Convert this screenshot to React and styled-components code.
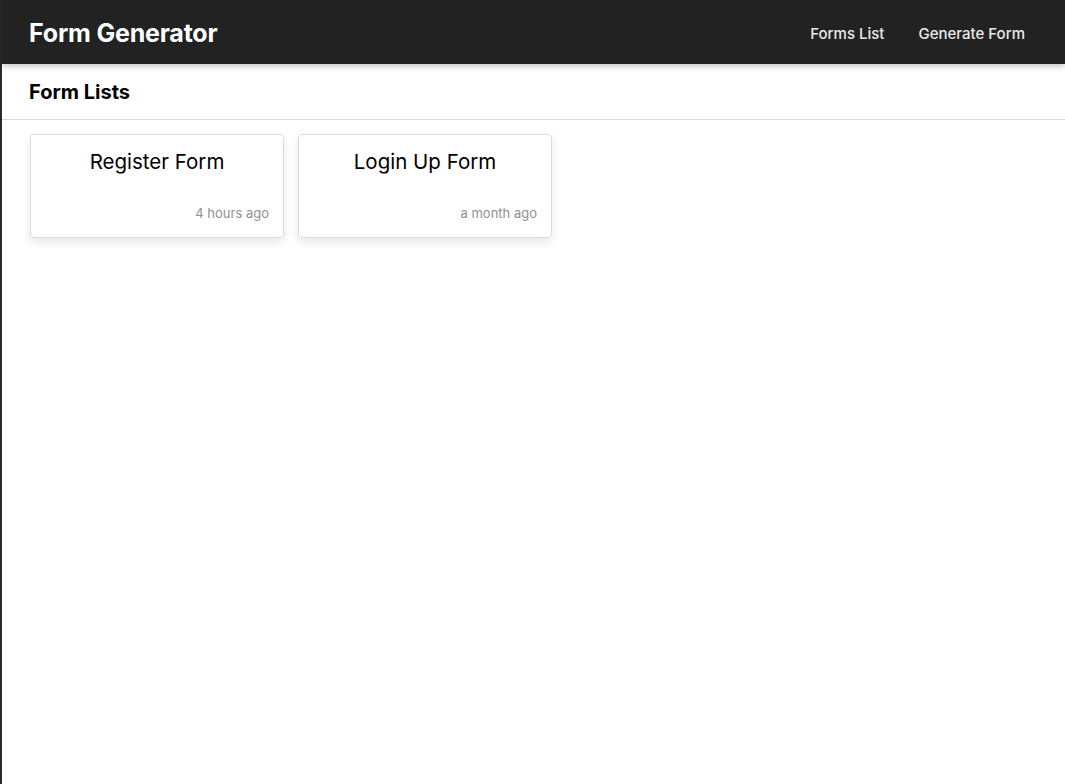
import React from 'react';
import styled, { createGlobalStyle } from 'styled-components';

const GlobalStyle = createGlobalStyle`
  html, body {
    margin: 0;
    padding: 0;
    background: #fff;
  }
  body {
    font-family: Inter, "Noto Sans", sans-serif;
    color: #000;
  }
  * {
    box-sizing: border-box;
  }
`;

const Page = styled.div`
  min-height: 784px;
  border-left: 2px solid #2a2a2a;
`;

const Header = styled.header`
  height: 64px;
  background: #222222;
  display: flex;
  align-items: center;
  justify-content: space-between;
  padding: 2px 40px 0 27px;
  box-shadow: 0 2px 6px rgba(0, 0, 0, 0.25);
  position: relative;
  z-index: 1;
  h1 {
    margin: 0;
    font-size: 25px;
    font-weight: 700;
    color: #fff;
    letter-spacing: -0.2px;
  }
`;

const Nav = styled.nav`
  display: flex;
  gap: 34px;
  a {
    color: #eaeaea;
    text-decoration: none;
    font-size: 15px;
    font-weight: 500;
  }
`;

const SubHeader = styled.div`
  height: 56px;
  display: flex;
  align-items: center;
  padding: 1px 27px 0;
  border-bottom: 1px solid #d9d9d9;
  h2 {
    margin: 0;
    font-size: 20px;
    font-weight: 700;
  }
`;

const Grid = styled.div`
  display: flex;
  gap: 14px;
  padding: 14px 28px;
`;

const Card = styled.div`
  width: 254px;
  height: 104px;
  border: 1px solid #dcdcdc;
  border-radius: 4px;
  box-shadow: 0 4px 10px rgba(0, 0, 0, 0.1);
  display: flex;
  flex-direction: column;
  justify-content: space-between;
  padding: 14px 14px 16px;
  h3 {
    margin: 0;
    font-size: 20.5px;
    font-weight: 400;
    text-align: center;
  }
  span {
    align-self: flex-end;
    font-size: 13px;
    color: #8f8f8f;
  }
`;

const forms = [
  { name: 'Register Form', time: '4 hours ago' },
  { name: 'Login Up Form', time: 'a month ago' },
];

export default function App() {
  return (
    <Page>
      <GlobalStyle />
      <Header>
        <h1>Form Generator</h1>
        <Nav>
          <a href="#">Forms List</a>
          <a href="#">Generate Form</a>
        </Nav>
      </Header>
      <SubHeader>
        <h2>Form Lists</h2>
      </SubHeader>
      <Grid>
        {forms.map((f) => (
          <Card key={f.name}>
            <h3>{f.name}</h3>
            <span>{f.time}</span>
          </Card>
        ))}
      </Grid>
    </Page>
  );
}
